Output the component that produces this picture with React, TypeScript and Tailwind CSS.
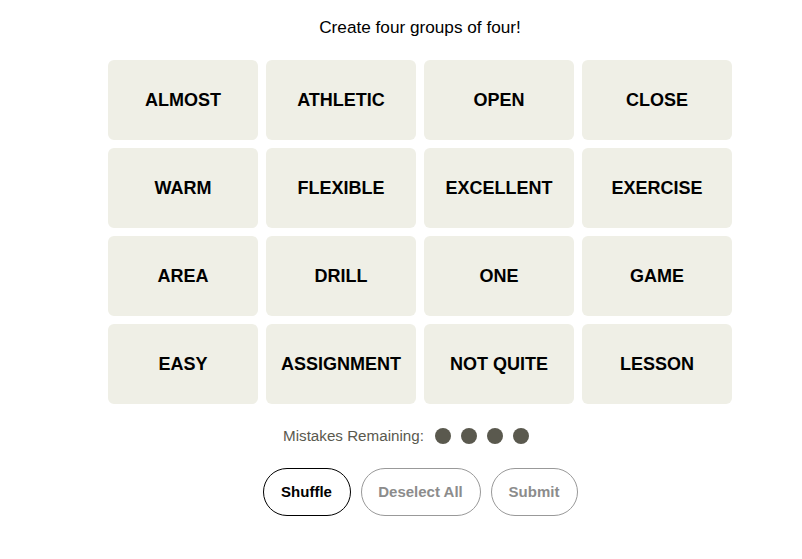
import React from "react";

const words = [
  "ALMOST", "ATHLETIC", "OPEN", "CLOSE",
  "WARM", "FLEXIBLE", "EXCELLENT", "EXERCISE",
  "AREA", "DRILL", "ONE", "GAME",
  "EASY", "ASSIGNMENT", "NOT QUITE", "LESSON",
];

export default function App() {
  return (
    <div className="w-[802px] h-[559px] bg-white overflow-hidden" style={{ fontFamily: '"Liberation Sans", Arial, sans-serif' }}>
      <div className="ml-[108px] w-[624px] flex flex-col items-center">
        <p className="mt-[16px] h-[22px] leading-[22px] text-[17.2px] text-black">Create four groups of four!</p>
        <div className="mt-[22px] grid grid-cols-4 gap-[8px] w-full">
          {words.map((w) => (
            <div key={w} className="h-[80px] rounded-[6px] bg-[#efefe6] flex items-center justify-center text-[18px] font-bold text-black">
              {w}
            </div>
          ))}
        </div>
        <div className="mt-[20px] h-[24px] flex items-center text-[15.2px] text-[#5a594e] mr-[28px]">
          <span className="mr-[11px]">Mistakes Remaining:</span>
          <div className="flex gap-[10px]">
            <span className="w-[16px] h-[16px] rounded-full bg-[#5a594e]" />
            <span className="w-[16px] h-[16px] rounded-full bg-[#5a594e]" />
            <span className="w-[16px] h-[16px] rounded-full bg-[#5a594e]" />
            <span className="w-[16px] h-[16px] rounded-full bg-[#5a594e]" />
          </div>
        </div>
        <div className="mt-[20px] flex gap-[10px]">
          <button className="w-[88px] h-[48px] rounded-full border border-black text-black text-[15px] font-semibold">Shuffle</button>
          <button className="w-[120px] h-[48px] rounded-full border border-[#999] text-[#8c8c8c] text-[15px] font-semibold">Deselect All</button>
          <button className="w-[87px] h-[48px] rounded-full border border-[#999] text-[#8c8c8c] text-[15px] font-semibold">Submit</button>
        </div>
      </div>
    </div>
  );
}
